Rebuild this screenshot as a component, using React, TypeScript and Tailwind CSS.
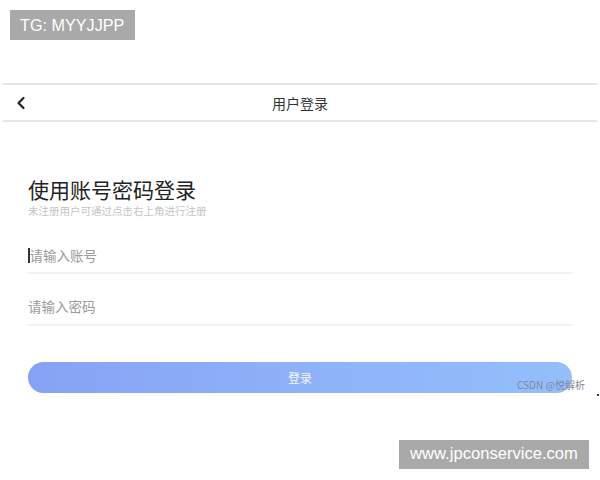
import React from 'react';

/**
 * Login screen ("用户登录") with watermark badges
 */

const cjk = { fontFamily: '"Noto Sans CJK SC", "Noto Sans", sans-serif' };
const latin = { fontFamily: '"Liberation Sans", Arial, sans-serif' };

function BackIcon() {
  return (
    <svg width="10" height="14" viewBox="0 0 10 14" fill="none">
      <path d="M7.5 2 L2.5 7 L7.5 12" stroke="#222" strokeWidth="2.2" strokeLinecap="round" strokeLinejoin="round" />
    </svg>
  );
}

export default function App() {
  return (
    <div className="relative w-[600px] h-[480px] bg-white overflow-hidden" style={cjk}>
      {/* Watermark badge top */}
      <div
        className="absolute left-[10px] top-[10px] w-[125px] h-[30px] pl-[10px] flex items-center bg-[#a9a9a9] text-white text-[16.2px]"
        style={latin}
      >
        TG: MYYJJPP
      </div>

      {/* Header */}
      <header className="mt-[83px] mx-[3px] h-[39px] border-y-2 border-[#e6e6e6] flex items-center relative">
        <div className="pl-[13px] flex items-center">
          <BackIcon />
        </div>
        <h1 className="absolute left-0 right-0 text-center text-[14px] leading-[20px] text-[#333]">用户登录</h1>
      </header>

      {/* Main */}
      <main className="px-[28px] pt-[55px]">
        <h2 className="text-[21px] leading-[24px] text-[#222]">使用账号密码登录</h2>
        <p className="text-[10.5px] leading-[12px] text-[#c4c4c4] mt-[4px]">未注册用户可通过点击右上角进行注册</p>

        <div className="mt-[21px] h-[36px] border-b-2 border-[#f1f1f1] flex items-center">
          <span className="w-[1.5px] h-[15px] bg-[#333]" />
          <span className="text-[13.5px] text-[#9a9a9a]">请输入账号</span>
        </div>
        <div className="mt-[14px] h-[38px] border-b-2 border-[#f1f1f1] flex items-center">
          <span className="text-[13.5px] text-[#9a9a9a]">请输入密码</span>
        </div>

        <button className="mt-[36px] w-full h-[31px] rounded-full bg-gradient-to-r from-[#87a2f5] via-[#8eb1f8] to-[#94bffb] text-white/90 text-[12px] flex items-center justify-center">
          登录
        </button>
      </main>

      {/* CSDN watermark over button */}
      <div className="absolute left-[517px] top-[377px] text-[10px] text-[#7f889b]" style={cjk}>
        CSDN @悦解析
      </div>
      <div className="absolute left-[597px] top-[394px] w-[2px] h-[2px] bg-[#333]" />

      {/* Watermark badge bottom */}
      <div
        className="absolute left-[399px] top-[440px] w-[190px] h-[29px] flex items-center justify-center bg-[#a9a9a9] text-white text-[16.6px]"
        style={latin}
      >
        www.jpconservice.com
      </div>
    </div>
  );
}
